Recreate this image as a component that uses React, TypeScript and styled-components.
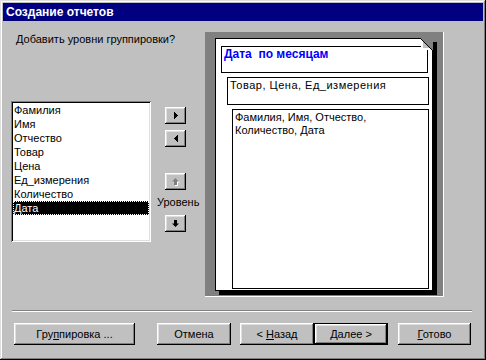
import React from "react";
import styled, { createGlobalStyle } from "styled-components";

const Global = createGlobalStyle`
  html, body { margin: 0; padding: 0; background: #c0c0c0; }
  body { font-family: "Liberation Sans", Arial, sans-serif; font-size: 11px; color: #000; }
  * { box-sizing: border-box; }
`;

const Window = styled.div`
  width: 486px;
  height: 360px;
  padding: 3px;
  background: #c0c0c0;
  display: flex;
  flex-direction: column;
  box-shadow: inset -1px -1px #000, inset 1px 1px #dfdfdf, inset -2px -2px #808080, inset 2px 2px #fff;
`;

const TitleBar = styled.div`
  height: 18px;
  background: #000080;
  color: #fff;
  font-weight: bold;
  font-size: 12px;
  line-height: 18px;
  padding-left: 3px;
  white-space: nowrap;
`;

const Main = styled.div`
  display: flex;
  padding: 11px 0 0 8px;
`;

const LeftColumn = styled.div`
  width: 194px;
  display: flex;
  flex-direction: column;
`;

const Prompt = styled.div`
  margin-left: 5px;
  line-height: 14px;
  height: 14px;
  white-space: nowrap;
`;

const ListRow = styled.div`
  display: flex;
  margin-top: 55px;
`;

const ListBox = styled.div`
  width: 140px;
  height: 141px;
  background: #fff;
  padding: 2px;
  box-shadow: inset 1px 1px #808080, inset -1px -1px #fff, inset 2px 2px #000, inset -2px -2px #dfdfdf;
`;

const ListItem = styled.div<{ $selected?: boolean }>`
  height: 14px;
  line-height: 14px;
  padding-left: 1px;
  white-space: nowrap;
  background: ${(p) => (p.$selected ? "#000" : "transparent")};
  color: ${(p) => (p.$selected ? "#fff" : "#000")};
  outline: ${(p) => (p.$selected ? "1px dotted #fff" : "none")};
  outline-offset: -1px;
`;

const ArrowColumn = styled.div`
  display: flex;
  flex-direction: column;
  align-items: flex-start;
  margin-left: 6px;
  padding-top: 6px;
`;

const SmallButton = styled.div<{ $gap: number }>`
  width: 21px;
  height: 17px;
  margin-left: 8px;
  margin-top: ${(p) => p.$gap}px;
  display: flex;
  align-items: center;
  justify-content: center;
  background: #c0c0c0;
  box-shadow: inset -1px -1px #000, inset 1px 1px #fff, inset -2px -2px #808080, inset 2px 2px #dfdfdf;
`;

const LevelLabel = styled.div`
  margin-top: 5px;
  line-height: 14px;
  height: 14px;
  white-space: nowrap;
`;

const PreviewPanel = styled.div`
  width: 239px;
  height: 265px;
  background: #808080;
  border-right: 1px solid #fff;
  border-bottom: 1px solid #fff;
  padding: 6px 0 0 10px;
`;

const Paper = styled.div`
  position: relative;
  width: 218px;
  height: 253px;
  background: #fff;
  border: 1px solid #000;
  box-shadow: 4px 4px 0 #000;
  display: flex;
  flex-direction: column;
`;

const Corner = styled.svg`
  position: absolute;
  top: -1px;
  right: -1px;
`;

const GroupBox = styled.div<{ $indent: number; $w: number; $h: number; $top: number; $spacing?: number }>`
  margin-left: ${(p) => p.$indent}px;
  margin-top: ${(p) => p.$top}px;
  width: ${(p) => p.$w}px;
  height: ${(p) => p.$h}px;
  border: 1px solid #000;
  padding: 1px 2px 0 2px;
  letter-spacing: ${(p) => p.$spacing ?? 0}px;
  line-height: 13px;
`;

const HeaderText = styled.div`
  color: #0000ff;
  font-weight: bold;
  font-size: 12px;
  white-space: pre;
  line-height: 13px;
`;

const Separator = styled.div`
  margin: 13px 11px 0 9px;
  border-top: 1px solid #808080;
  border-bottom: 1px solid #fff;
`;

const ButtonRow = styled.div`
  display: flex;
  margin-top: 11px;
  padding-left: 11px;
`;

const Button = styled.div<{ $w: number; $gap: number; $default?: boolean }>`
  width: ${(p) => p.$w}px;
  height: 22px;
  margin-left: ${(p) => p.$gap}px;
  display: flex;
  align-items: center;
  justify-content: center;
  white-space: pre;
  background: #c0c0c0;
  box-shadow: ${(p) =>
    p.$default
      ? "inset 0 0 0 1px #000, inset -2px -2px #000, inset 2px 2px #fff, inset -3px -3px #808080, inset 3px 3px #dfdfdf"
      : "inset -1px -1px #000, inset 1px 1px #fff, inset -2px -2px #808080, inset 2px 2px #dfdfdf"};
`;

const Key = styled.span`
  text-decoration: underline;
`;

const Chevron = ({ dir }: { dir: "left" | "right" }) => (
  <svg width="4" height="7" viewBox="0 0 4 7" shapeRendering="crispEdges">
    {dir === "right" ? (
      <>
        <rect x="0" y="0" width="1" height="7" />
        <rect x="1" y="1" width="1" height="5" />
        <rect x="2" y="2" width="1" height="3" />
        <rect x="3" y="3" width="1" height="1" />
      </>
    ) : (
      <>
        <rect x="3" y="0" width="1" height="7" />
        <rect x="2" y="1" width="1" height="5" />
        <rect x="1" y="2" width="1" height="3" />
        <rect x="0" y="3" width="1" height="1" />
      </>
    )}
  </svg>
);

const BlockArrow = ({ dir, disabled }: { dir: "up" | "down"; disabled?: boolean }) => {
  const shape =
    dir === "up"
      ? "M3.5 0 L7 3.5 L5 3.5 L5 7 L2 7 L2 3.5 L0 3.5 Z"
      : "M2 0 L5 0 L5 3.5 L7 3.5 L3.5 7 L0 3.5 L2 3.5 Z";
  return (
    <svg width="8" height="8" viewBox="0 0 8 8">
      {disabled && <path d={shape} fill="#fff" transform="translate(1 1)" />}
      <path d={shape} fill={disabled ? "#808080" : "#000"} />
    </svg>
  );
};

const fields = ["Фамилия", "Имя", "Отчество", "Товар", "Цена", "Ед_измерения", "Количество", "Дата"];

export default function App() {
  return (
    <>
      <Global />
      <Window>
        <TitleBar>Создание отчетов</TitleBar>
        <Main>
          <LeftColumn>
            <Prompt>Добавить уровни группировки?</Prompt>
            <ListRow>
              <ListBox>
                {fields.map((f) => (
                  <ListItem key={f} $selected={f === "Дата"}>
                    {f}
                  </ListItem>
                ))}
              </ListBox>
              <ArrowColumn>
                <SmallButton $gap={0}>
                  <Chevron dir="right" />
                </SmallButton>
                <SmallButton $gap={6}>
                  <Chevron dir="left" />
                </SmallButton>
                <SmallButton $gap={26}>
                  <BlockArrow dir="up" disabled />
                </SmallButton>
                <LevelLabel>Уровень</LevelLabel>
                <SmallButton $gap={6}>
                  <BlockArrow dir="down" />
                </SmallButton>
              </ArrowColumn>
            </ListRow>
          </LeftColumn>
          <PreviewPanel>
            <Paper>
              <Corner width="13" height="13" viewBox="0 0 13 13" shapeRendering="crispEdges">
                <polygon points="0,0 13,0 13,13" fill="#808080" />
                <polygon points="1,1 12,12 1,12" fill="#fff" />
                <polygon points="3,4 9,10 3,10" fill="#c0c0c0" />
                <line x1="0.5" y1="0.5" x2="12.5" y2="12.5" stroke="#000" />
                <line x1="12.5" y1="12" x2="12.5" y2="13" stroke="#000" />
              </Corner>
              <GroupBox $indent={5} $top={7} $w={207} $h={27}>
                <HeaderText>Дата  по месяцам</HeaderText>
              </GroupBox>
              <GroupBox $indent={11} $top={4} $w={202} $h={28} $spacing={0.5}>
                Товар, Цена, Ед_измерения
              </GroupBox>
              <GroupBox $indent={16} $top={4} $w={197} $h={180}>
                Фамилия, Имя, Отчество,
                <br />
                Количество, Дата
              </GroupBox>
            </Paper>
          </PreviewPanel>
        </Main>
        <Separator />
        <ButtonRow>
          <Button $w={121} $gap={0}>
            <span>
              Гру<Key>п</Key>пировка ...
            </span>
          </Button>
          <Button $w={74} $gap={22}>
            Отмена
          </Button>
          <Button $w={74} $gap={9}>
            <span>
              {"< "}
              <Key>Н</Key>азад
            </span>
          </Button>
          <Button $w={74} $gap={0} $default>
            <span>
              <Key>Д</Key>алее {">"}
            </span>
          </Button>
          <Button $w={73} $gap={10}>
            <span>
              <Key>Г</Key>отово
            </span>
          </Button>
        </ButtonRow>
      </Window>
    </>
  );
}
